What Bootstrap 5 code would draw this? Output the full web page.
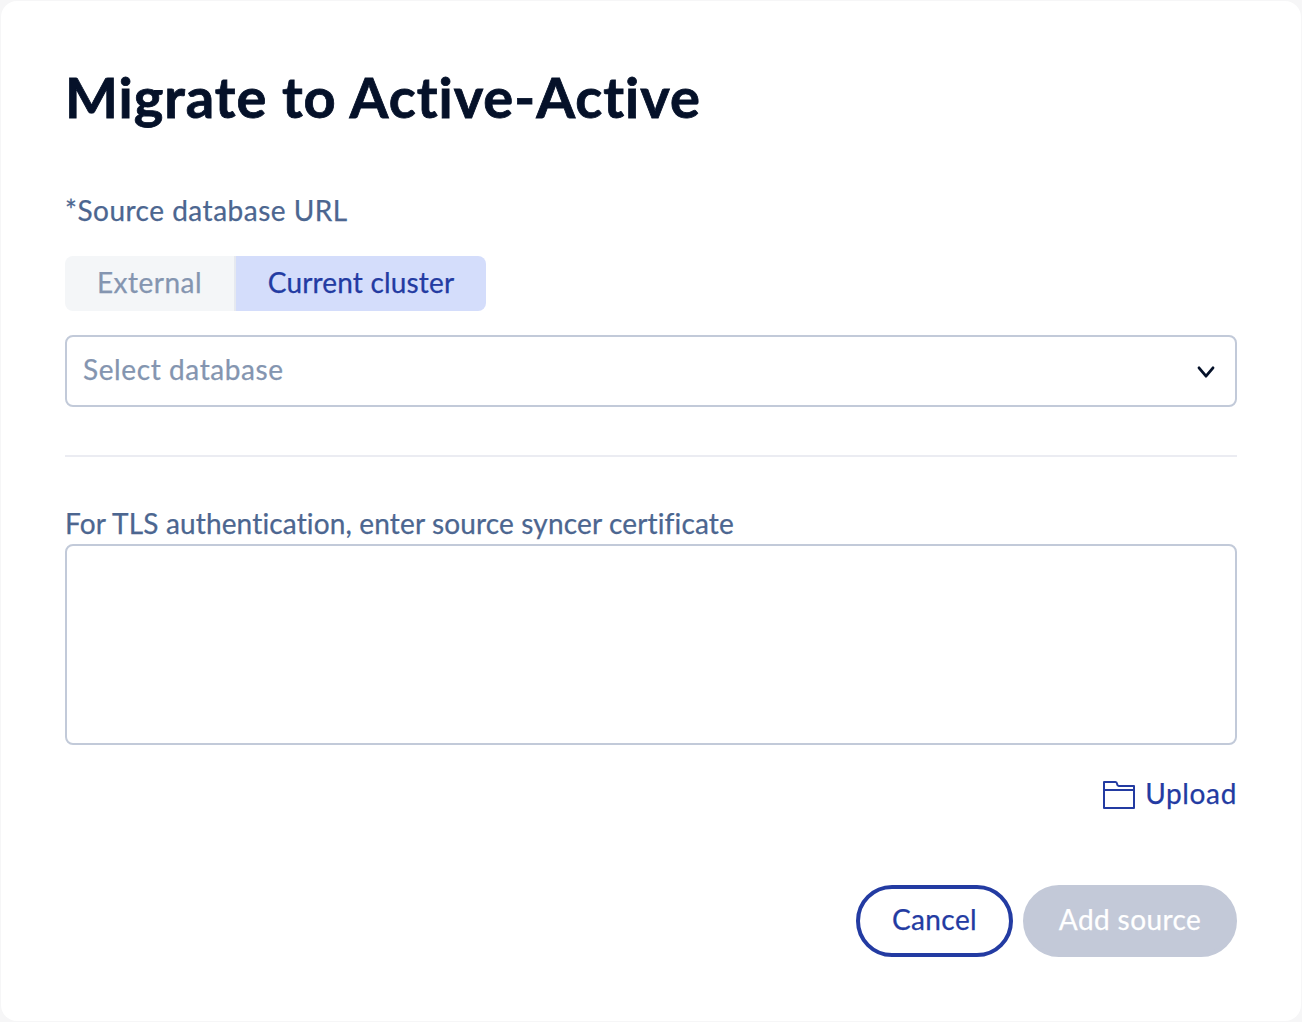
<!DOCTYPE html>
<html lang="en">
<head>
<meta charset="utf-8">
<meta name="viewport" content="width=device-width, initial-scale=1">
<title>Migrate to Active-Active</title>
<link rel="stylesheet" href="https://cdn.jsdelivr.net/npm/bootstrap@5.3.0/dist/css/bootstrap.min.css">
<style>
  html, body { height: 100%; overflow: hidden; }
  body { background: #f6f6f7; font-family: Lato, "Open Sans", sans-serif; font-size: 28px; line-height: 36px; color: #4c6690; padding: 1px; font-variant-ligatures: none; -webkit-text-stroke: .25px currentColor; }
  .dialog { height: 1020px; border-radius: 16px; padding: 64px; }
  .dialog-title { font-size: 56px; font-weight: 700; line-height: 64px; color: #051129; letter-spacing: 1px; margin: 0 0 63px; -webkit-text-stroke-width: .8px; }
  .url-label { letter-spacing: .5px; margin-bottom: 28px; }
  .seg { height: 55px; border-radius: 8px; overflow: hidden; margin-bottom: 24px; }
  .seg .seg-item { display: block; border: 0; border-radius: 0; font-size: 28px; padding: 0; line-height: 52px; height: 55px; padding-bottom: 3px; }
  .seg .seg-off { width: 171px; background: #f4f6f8; color: #8495b0; border-right: 2px solid #e6e9f0; letter-spacing: .5px; }
  .seg .seg-on { width: 250px; background: #d4ddfb; color: #233ba2; letter-spacing: .17px; }
  .box { border: 2px solid #c2cad9; border-radius: 8px; box-shadow: none; background: #fff; }
  .picker { height: 72px; padding: 0 20px 4px 16px; color: #8495b0; letter-spacing: .6px; }
  .picker svg { margin-top: 6px; }
  .rule { height: 2px; background: #ebecf2; margin: 48px 0; }
  .cert-label { letter-spacing: .15px; margin-bottom: 3px; }
  .cert { height: 201px; min-height: 201px; resize: none; }
  .upload { color: #233ba2; gap: 10px; letter-spacing: .65px; margin-top: 30px; }
  .upload svg { margin-top: 4px; }
  .pill { height: 72px; border-radius: 36px; font-size: 28px; padding: 0 0 4px; line-height: 60px; border-width: 4px; letter-spacing: .4px; }
  .pill-cancel { width: 157px; color: #233ba2; border-color: #233ba2; background: #fff; }
  .pill-add, .pill-add:disabled { width: 214px; color: #fff; border-color: #c3c9d8; background: #c3c9d8; opacity: 1; }
  .actions { gap: 10px; }
</style>
</head>
<body>
<main class="dialog bg-white d-flex flex-column">
  <h1 class="dialog-title">Migrate to Active-Active</h1>
  <div class="url-label">*Source database URL</div>
  <div class="seg d-flex align-self-start" role="group">
    <button type="button" class="btn seg-item seg-off">External</button>
    <button type="button" class="btn seg-item seg-on">Current cluster</button>
  </div>
  <div class="box picker d-flex align-items-center justify-content-between" role="combobox">
    <span>Select database</span>
    <svg width="18" height="14" viewBox="0 0 18 14" fill="none" stroke="#051129" stroke-width="2.8" stroke-linecap="round" stroke-linejoin="round"><path d="M2 2.8 9 11.2l7-8.4"/></svg>
  </div>
  <div class="rule"></div>
  <label class="cert-label" for="cert">For TLS authentication, enter source syncer certificate</label>
  <textarea id="cert" class="form-control box cert"></textarea>
  <div class="upload d-flex align-items-center align-self-end">
    <svg width="32" height="28" viewBox="0 0 32 28" fill="none" stroke="#233ba2" stroke-width="2" stroke-linejoin="round"><path d="M1 27V1H12.5q1.3 0 1.6 2T15.7 5H31V27ZM1 9H31"/></svg>
    <span>Upload</span>
  </div>
  <div class="actions d-flex justify-content-end mt-auto">
    <button type="button" class="btn pill pill-cancel">Cancel</button>
    <button type="button" class="btn pill pill-add" disabled>Add source</button>
  </div>
</main>
<script src="https://cdn.jsdelivr.net/npm/bootstrap@5.3.0/dist/js/bootstrap.bundle.min.js"></script>
</body>
</html>
